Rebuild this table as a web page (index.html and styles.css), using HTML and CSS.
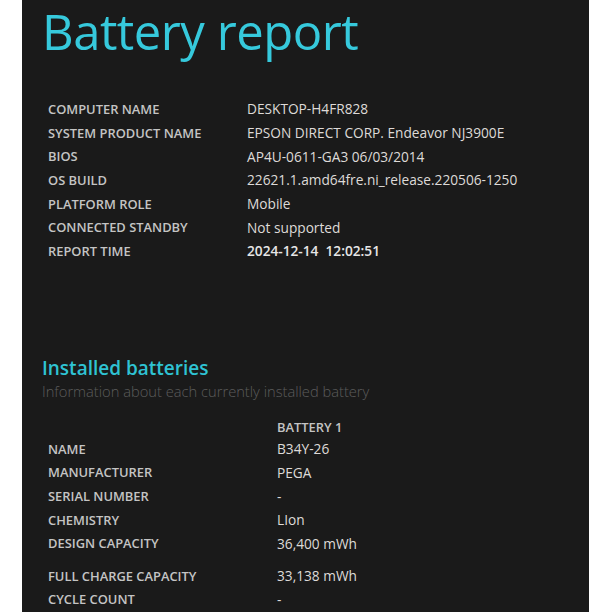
FILE: index.html
```html
<!DOCTYPE html>
<html>
<head>
<meta charset="utf-8">
<link rel="stylesheet" href="styles.css">
</head>
<body>
<div class="panel">
  <h1 class="title">Battery report</h1>
  <div class="info">
    <div class="row"><span class="label">COMPUTER NAME</span><span class="value">DESKTOP-H4FR828</span></div>
    <div class="row"><span class="label">SYSTEM PRODUCT NAME</span><span class="value">EPSON DIRECT CORP. Endeavor NJ3900E</span></div>
    <div class="row"><span class="label">BIOS</span><span class="value">AP4U-0611-GA3 06/03/2014</span></div>
    <div class="row"><span class="label">OS BUILD</span><span class="value">22621.1.amd64fre.ni_release.220506-1250</span></div>
    <div class="row"><span class="label">PLATFORM ROLE</span><span class="value">Mobile</span></div>
    <div class="row"><span class="label">CONNECTED STANDBY</span><span class="value">Not supported</span></div>
    <div class="row"><span class="label">REPORT TIME</span><span class="value strong">2024-12-14&nbsp;&nbsp;12:02:51</span></div>
  </div>
  <h2 class="section">Installed batteries</h2>
  <p class="sub">Information about each currently installed battery</p>
  <div class="batt">
    <div class="row head"><span class="label"></span><span class="label">BATTERY 1</span></div>
    <div class="row"><span class="label">NAME</span><span class="value">B34Y-26</span></div>
    <div class="row"><span class="label">MANUFACTURER</span><span class="value">PEGA</span></div>
    <div class="row"><span class="label">SERIAL NUMBER</span><span class="value">-</span></div>
    <div class="row"><span class="label">CHEMISTRY</span><span class="value">LIon</span></div>
    <div class="row"><span class="label">DESIGN CAPACITY</span><span class="value">36,400 mWh</span></div>
    <div class="row gap"><span class="label">FULL CHARGE CAPACITY</span><span class="value">33,138 mWh</span></div>
    <div class="row"><span class="label">CYCLE COUNT</span><span class="value">-</span></div>
  </div>
</div>
</body>
</html>
```
FILE: styles.css
```css
html, body {
  margin: 0;
  padding: 0;
  background: #ffffff;
}
body {
  height: 612px;
  overflow: hidden;
}
.panel {
  margin-left: 22px;
  width: 567px;
  height: 612px;
  background: #1a1a1a;
  font-family: "Open Sans", "Noto Sans", sans-serif;
  box-sizing: border-box;
  padding: 0 0 0 20px;
  overflow: hidden;
}
.title {
  margin: 0;
  font-weight: 400;
  font-size: 49px;
  line-height: 62px;
  color: #36c9dc;
  letter-spacing: -0.5px;
}
.info {
  margin-top: 35px;
  display: flex;
  flex-direction: column;
}
.row {
  display: flex;
  height: 23.7px;
  align-items: center;
}
.label {
  width: 199px;
  padding-left: 6px;
  font-size: 12.9px;
  font-weight: 600;
  color: #c4c4c4;
  flex: none;
}
.value {
  font-size: 13.7px;
  color: #dedad8;
}
.strong {
  font-weight: 600;
  color: #e6e6e6;
}
.section {
  margin: 93px 0 0 0;
  font-size: 19px;
  font-weight: 600;
  line-height: 24px;
  color: #2fc3d3;
}
.sub {
  margin: 0;
  font-size: 14.7px;
  font-weight: 300;
  line-height: 22px;
  color: #5c5c5c;
}
.batt {
  margin-top: 15px;
  display: flex;
  flex-direction: column;
}
.batt .label {
  width: 229px;
}
.batt .row .label + .label {
  width: auto;
  padding-left: 0;
}
.head {
  height: 20px;
}
.gap {
  margin-top: 8.5px;
}
```
